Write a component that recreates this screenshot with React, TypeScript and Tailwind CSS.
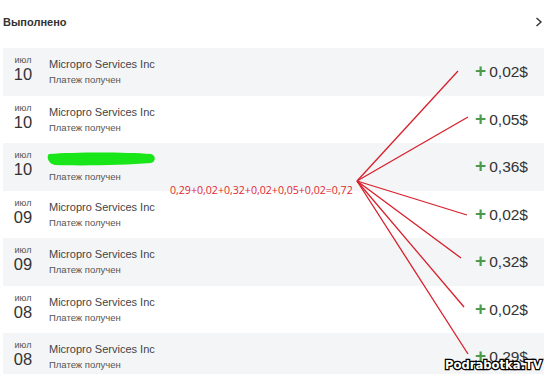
import * as React from "react";

type Payment = { day: string; name: string | null; amount: string };

const payments: Payment[] = [
  { day: "10", name: "Micropro Services Inc", amount: "0,02$" },
  { day: "10", name: "Micropro Services Inc", amount: "0,05$" },
  { day: "10", name: null, amount: "0,36$" },
  { day: "09", name: "Micropro Services Inc", amount: "0,02$" },
  { day: "09", name: "Micropro Services Inc", amount: "0,32$" },
  { day: "08", name: "Micropro Services Inc", amount: "0,02$" },
  { day: "08", name: "Micropro Services Inc", amount: "0,29$" },
];

// end points of the hand-drawn red lines, from one origin
const origin = [357, 181];
const ends = [
  [458, 71],
  [468, 117],
  [467, 215],
  [461, 258],
  [464, 307],
  [468, 354],
];

function Row({ p, shaded }: { p: Payment; shaded: boolean }) {
  return (
    <div className={`h-[47.5px] flex items-start ${shaded ? "bg-[#f4f5f7]" : "bg-white"}`}>
      <div className="w-[34px] shrink-0 ml-[3px] flex flex-col items-center pt-[7px] text-center">
        <span className="text-[9px] leading-[10px] text-[#555]">июл</span>
        <span className="text-[16.5px] leading-[18px] text-[#333]">{p.day}</span>
      </div>
      <div className="ml-[9px] flex flex-col pt-[9px]">
        {p.name ? (
          <span className="text-[11px] leading-[14px] text-[#444]">{p.name}</span>
        ) : (
          <svg width="112" height="16" viewBox="0 0 112 16" className="-ml-[4px] -mt-[1px] mb-[1px]">
            <path
              d="M4 3 C30 1 80 1 106 3 C111 4 111 11 106 12 C80 14 40 15 10 14 C3 13 1 5 4 3 Z"
              fill="#19e619"
            />
          </svg>
        )}
        <span className="text-[9.5px] leading-[12px] text-[#555] mt-[3px]">Платеж получен</span>
      </div>
      <div className="ml-auto mr-[16px] flex items-center self-center gap-[3px]">
        <span className="text-[19px] leading-none text-[#4a9a4a] font-bold -mt-[2px]">+</span>
        <span className="text-[15.5px] leading-none text-[#333]">{p.amount}</span>
      </div>
    </div>
  );
}

export default function App() {
  return (
    <div className="relative w-[550px] h-[374px] overflow-hidden bg-white font-['Liberation_Sans',Arial,sans-serif]">
      <div className="pl-[3px] pr-[6px]">
        <div className="h-[48px] flex items-start justify-between pt-[14px]">
          <span className="text-[11px] font-bold text-[#333]">Выполнено</span>
          <svg width="8" height="10" viewBox="0 0 8 10" className="mt-[3px] mr-[1px]">
            <path d="M1.5 1 L6 5 L1.5 9" fill="none" stroke="#333" strokeWidth="1.4" />
          </svg>
        </div>
        {payments.map((p, i) => (
          <Row key={i} p={p} shaded={i % 2 === 0} />
        ))}
      </div>

      <svg className="absolute inset-0 pointer-events-none" width="550" height="374">
        {ends.map(([x, y], i) => (
          <line key={i} x1={origin[0]} y1={origin[1]} x2={x} y2={y} stroke="#d8202c" strokeWidth="1.3" />
        ))}
      </svg>

      <div className="absolute left-[170px] top-[183px] text-[10.6px] leading-[14px] text-[#e0282e] font-['Open_Sans',sans-serif]">
        0,29+0,02+0,32+0,02+0,05+0,02=0,72
      </div>

      <div className="absolute left-[445px] top-[357px] text-[11.6px] font-bold leading-[16px] text-white font-['DejaVu_Sans',sans-serif] [-webkit-text-stroke:2.5px_#000] [paint-order:stroke_fill]">
        Podrabotka.TV
      </div>
    </div>
  );
}
